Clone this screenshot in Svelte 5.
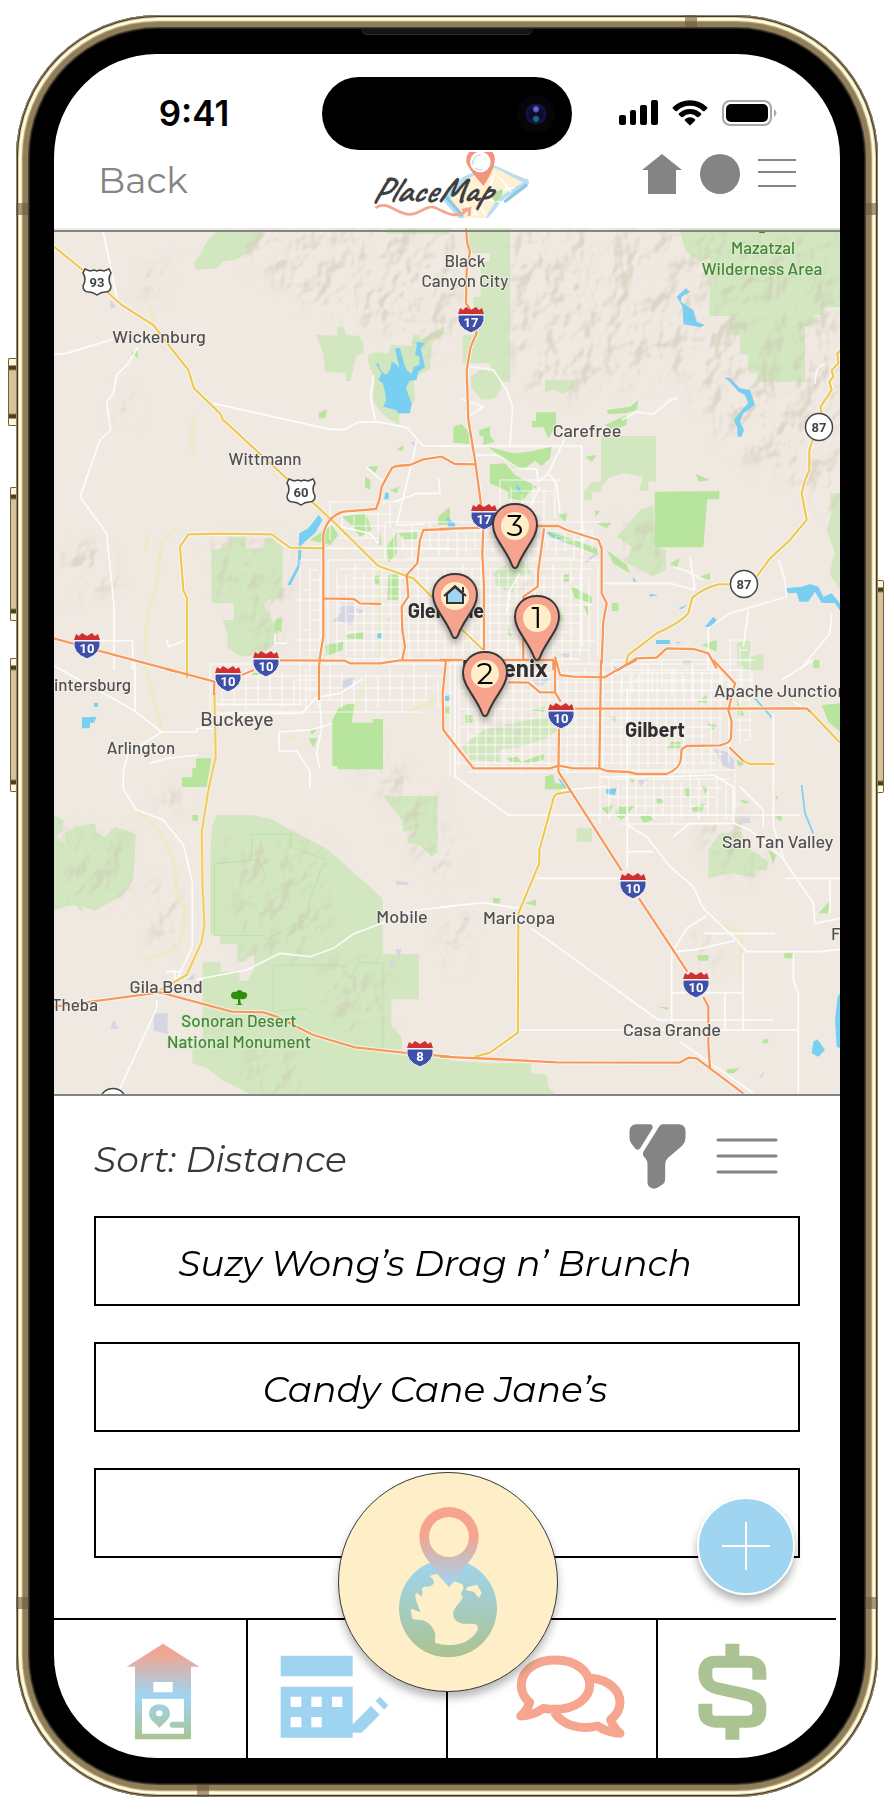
<script>
  const places = ['Suzy Wong’s Drag n’ Brunch', 'Candy Cane Jane’s', ''];

  // Pin tips on the map, in map units.
  const pins = [
    { label: '3', x: 515, y: 568 },
    { label: '', x: 455, y: 638 },
    { label: '1', x: 537, y: 660 },
    { label: '2', x: 485, y: 716 }
  ];

  const origin = {
    nw: 'translate(50 220) scale(.33333)',
    ne: 'translate(440 220) scale(.33333)',
    sw: 'translate(50 660) scale(.33333)',
    se: 'translate(440 660) scale(.33333)'
  };

  const parks = [
    ['nw', 'M470 65L500 35H638V50L610 75L600 95L560 118L520 125L500 145L440 150L432 130L450 105Z'],
    ['nw', 'M1010 25H1200V42H1010Z'],
    ['nw', 'M798 345L862 347V320H880L890 345L925 348L940 365V400L918 408L902 483H888V458L825 456L820 400Z'],
    ['nw', 'M955 405L985 395L1012 402L1025 375L1085 378L1090 345H1110L1112 360L1182 318V340L1145 368L1140 448L1105 465L1090 480L1095 540L1075 572L1048 585V615L1008 592L985 565L968 540L975 480L955 430Z'],
    ['nw', 'M484 990L537 982V952H587V985H643V955H665L698 982V1135H665L640 1150L680 1225V1265L650 1290L590 1310L565 1305L532 1285V1240L518 1200H552V1150H484Z'],
    ['ne', 'M75 25H210V485H152V430H68V345H100V230H122V125H150V100H80Z'],
    ['ne', 'M92 470L125 447L185 455L182 510L165 535L125 540L95 505Z'],
    ['ne', 'M315 480H402V500L370 522L340 510L315 515Z'],
    ['ne', 'M718 25H1200V262H1148V285H1120V320H1095V485H952V458H925V403H900V346H870V288H809V115L780 125L735 90Z'],
    ['ne', 'M483 648H648V785H625V812H598L608 770L548 760L505 775L485 800V815H455V840H432V815L455 785H483Z'],
    ['ne', 'M530 950L600 870L640 855L645 980L678 990V1050L640 1068L560 1030L575 980Z'],
    ['ne', 'M1170 820H1200V1110L1168 1060L1185 1000L1160 930L1175 880Z'],
    ['ne', 'M160 1060L230 1010L265 1035L272 1060L230 1070L220 1120L170 1100Z'],
    ['ne', 'M890 1270L930 1255V1310L970 1300V1350H895Z'],
    ['sw', 'M12 465L40 480V508L20 530L45 555V520L75 500L135 490L140 518L165 530L195 500L240 515L258 525L250 660L220 705L135 752L100 740L92 756L78 735L45 740L12 752Z'],
    ['sw', 'M500 465H605L665 478L835 570L998 715V882H1107V1018H1024V1098L1055 1130V1180L1200 1195V1302H600L525 1265L470 1225L427 1208V1170L458 1150V907H512V935H568V962H590L612 930V885L590 890L588 905H562V853H510V826H481V590L485 500Z'],
    ['sw', 'M1000 408H1163V578L1145 590L1110 555L1072 550L1095 510L1060 515L1055 480Z'],
    ['se', 'M0 1200L150 1210H272L275 1240L320 1245L325 1280L345 1302H0Z'],
    ['se', 'M65 260L130 210L240 185L320 170L355 210L320 235L240 260L180 270V305L90 300Z'],
    ['se', 'M805 570L840 520L905 515L915 560L952 580L985 605L980 630H945V655L875 640L805 655Z'],
    ['se', 'M410 505H456V545H410Z']
  ];

  const greens = [
    ['nw', 'M780 960L845 915L865 945L840 975ZM875 890L948 880L965 930L930 950L905 915ZM990 928L995 975L988 975ZM1010 980L1040 935L1040 1000L1015 1030ZM1045 940L1102 935L1100 960L1060 958ZM972 1070L987 1065V1095L975 1090ZM1015 1065L1045 1060V1140H1012ZM886 1245L940 1235V1258L890 1255ZM826 1275L880 1265L878 1290L830 1308ZM1020 810L1048 800L1040 820ZM1040 690L1060 675V692ZM945 770L962 780L960 810L945 800ZM1165 890L1200 860V915H1165ZM805 580L832 568L825 595L808 595ZM243 400L262 390L265 415ZM678 1200L695 1190V1235L672 1230ZM950 740L985 738L975 760Z'],
    ['ne', 'M40 620L65 612L88 640V672L40 668ZM118 630L150 620V648L165 665L130 675V648H118ZM288 577H348V620L325 655L310 622H276V603H288ZM500 570L570 560L595 540L590 570L555 580L505 582ZM495 615L560 585L560 615L520 630ZM145 680L220 700L270 695L335 680L330 715L305 738L285 722L255 745H225ZM150 733L195 730L225 765L290 800L265 820L248 842L205 835V815L150 790ZM644 815L838 813V838H802L790 982H644ZM435 710L470 705L455 725ZM768 762L810 780L775 785ZM315 928L470 985L475 1005L330 950ZM390 1095L455 1130V1150L405 1135ZM465 870L480 875L465 890ZM470 910L515 908L500 925ZM500 990L560 1035L570 1060L520 1030ZM355 885L382 880L375 905ZM370 1065L387 1062V1085H370ZM430 1155L445 1160V1190ZM515 1148L535 1150V1173H515ZM355 1170L370 1185V1205L352 1200ZM690 1030L720 1015L710 1045ZM780 1070L810 1058V1080ZM785 1275L830 1260V1295ZM270 1215L290 1225L280 1240ZM205 1215L215 1250L200 1245Z'],
    ['sw', 'M847 180L865 145L890 132H912L905 188H968V177H999V328H862V318H847ZM438 295H484L470 381H396V352H427V325H438ZM427 465H444V482H427ZM775 235H803L790 262ZM780 210L803 207L785 225ZM608 38H625V46H605Z'],
    ['se', 'M315 350L340 343L345 370L375 372V388H315ZM485 445L520 435L505 465ZM535 440L588 435L545 480L525 465ZM600 470L625 460L640 480L610 488ZM755 445L795 430L785 455L760 455ZM735 385L750 380V412L738 410ZM785 375L805 385L795 402ZM895 418L930 425L915 432ZM1003 470L1025 465V485ZM1005 408H1013V422ZM158 715H180V730H160ZM255 730L288 718V738ZM772 885H806V902H775ZM1033 878H1060V895H1033ZM1135 760L1168 725L1165 760ZM652 1040L685 1042V1050ZM968 1138H985V1150H968ZM860 1228L898 1225L882 1240L862 1240ZM985 570L1008 585L1000 612ZM800 190L830 195L820 210ZM695 245H722V265H680ZM890 115L912 165L895 170ZM770 125L800 105V130ZM1145 135L1200 130V215L1165 185ZM1120 0H1138V25H1120ZM15 140L30 140V160H15ZM75 165L98 165V188H78ZM265 150L315 140L312 155ZM200 295L230 290L245 305L315 280L310 300L270 310L210 305ZM505 170L528 170L525 185ZM565 355L585 358L580 370ZM650 415L670 420V430H650ZM890 300L918 310L895 320Z']
  ];

  const waters = [
    ['nw', 'M985 430L992 450L1008 465L1020 450L1025 425L1035 430L1048 445L1038 400L1035 385L1050 385L1062 430L1070 450L1085 462L1092 440L1108 435V410L1095 405L1100 380V365L1125 370L1112 385L1125 442L1105 455L1100 480L1078 482L1068 505L1085 550L1080 580H1045L1038 570L1000 560L1008 540L1005 515L998 490L985 480L995 460L978 432Z'],
    ['nw', 'M806 885L817 900L795 940L765 965L755 975L752 1035L722 1095L712 1095L743 1035L748 940L775 925Z'],
    ['nw', 'M1005 818H1016V838H1003ZM982 1240H995V1255H982ZM1188 893L1200 900V915Z'],
    ['ne', 'M710 230L738 205L750 215L725 230L722 245L760 270L770 305L795 315L780 322L730 312L728 260Z'],
    ['ne', 'M852 472L870 475L900 505L930 510L945 555L910 580L900 605L912 630L905 650H892V625L882 600L905 570L925 550L915 525L895 515L870 485Z'],
    ['ne', 'M1035 1105L1085 1100L1110 1092L1135 1100L1150 1130L1175 1120L1200 1150V1172L1185 1150L1145 1148L1125 1115L1105 1145L1078 1145L1070 1118L1045 1120Z'],
    ['ne', 'M20 892L45 910V920H25ZM230 790L245 815L230 815ZM648 1260H690V1272H648ZM712 1265L725 1270H710ZM820 1190L830 1200L815 1222L795 1220ZM715 1165L742 1155L725 1167ZM628 1122L655 1125L630 1130ZM318 932L370 960L370 965L318 940ZM578 1070L592 1088L580 1084Z'],
    ['sw', 'M96 172L140 170L132 188H120V205H96ZM132 128H144V140H132ZM1187 110H1200V120H1187Z'],
    ['se', 'M498 388L530 385L525 405L500 402ZM1120 1145L1132 1138L1155 1170L1135 1190L1115 1180ZM15 108L32 105V122H15ZM522 22H535L525 28ZM1200 1000V1165L1190 1160L1185 1080L1193 1010Z']
  ];

  const towns = [
    ['nw', 'M875 1150H912V1190L905 1215L870 1205L845 1205L872 1180ZM918 1165L940 1170L930 1185ZM180 240L195 255V265H180ZM1080 668L1095 665V678ZM1010 1205L1028 1180L1020 1200Z'],
    ['ne', 'M435 1025L468 995L470 1005L440 1030ZM362 1300H388V1312H362Z'],
    ['sw', 'M870 95L880 60L912 52L905 75ZM310 1060H353V1122L312 1112ZM1037 867H1055L1047 900ZM1020 905H1034V920H1020ZM1037 662L1075 667V674H1040ZM180 1105L192 1080L205 1108ZM410 960L435 940L430 960Z'],
    ['se', 'M820 265L860 275L882 300V330L850 318ZM595 360L632 352L600 378ZM900 475H930V489H900ZM70 775L88 770L78 788ZM730 0H752V15H730ZM270 60L335 55L300 80ZM955 1255L972 1235L968 1250Z']
  ];

  const washes = [
    ['nw', 'M382 925L335 960L322 1080L292 1190L285 1310M437 580L423 640L432 700M300 255L312 315M290 945V995'],
    ['sw', 'M285 20L325 160L333 215M262 452Q350 520 375 620L378 690L405 750L395 830Q380 880 290 897M955 60L905 160M1085 150L1180 115M708 232H738'],
    ['se', 'M840 795L905 815L900 940'],
    ['nw', 'M990 1010V1310M900 990V1000']
  ];

  const minor = [
    ['nw', 'M160 36L200 230M12 403L50 400L190 357M265 380L235 430L200 465L190 520L170 545L182 630L150 660L90 830L170 940L192 1155V1350M490 550L840 628H885L925 607L980 605L1070 622L1120 678H1200M970 465L962 530L975 600M1100 665L1040 915M948 740L1000 785M1030 845L1075 830L1100 820L1170 820L1165 775M350 1260L355 1280L402 1262M115 1262H248V1350M822 985H1200M848 915L960 940L985 970M675 1240V1270H710M1042 915L1125 912'],
    ['ne', 'M0 678H425V1280M60 535L130 560L85 590M90 440L160 450L200 510L218 560L210 675M110 705H175L235 745L290 748L295 785L325 760L375 655M325 760L350 790L360 880M270 860L300 800M545 600L590 575L640 583L690 540L715 535M490 1090H690L740 1103L765 1110M1015 1020L1035 1080L1040 1130L870 1180L805 1225V1350M1175 1180L1170 1240L1120 1300L1080 1350M925 1170L910 1280M1155 428L1130 450L1125 490M700 1040L745 1055L790 1080M750 1010L765 1110M240 1060L210 1110L200 1180'],
    ['sw', 'M12 17L250 150L335 216H440V205H495M335 216L235 280L220 330V388L260 450L340 480L400 555L427 665V860L380 960M255 0V150M300 310L350 295L445 285M495 160H755L800 112L870 100L940 55M805 60L815 205L800 280L810 328M687 216L780 210L820 200L845 190M687 216V273H740L780 335V385M440 958L590 930L690 880L780 890L850 865L910 822L1100 750L1200 740M320 1020V1045L208 1290M348 935H395M375 930V960M500 133H755'],
    ['se', 'M45 0V350L205 465H1080M0 742L130 728L235 745M290 655H540M562 80V625M562 495L620 530L690 620L760 680L790 745L890 840L920 875H1140L1200 868M800 768L740 805L695 880V1110M710 875L770 868L885 842M235 1110H1075M275 805L655 1080H1000M562 575H640M365 390L500 380M483 350L700 350L820 345L880 380V490L930 510L1025 590L1120 730L1125 790L1200 775M1000 160V500L1030 590M970 500V450L900 380M1060 880V960L1075 1000V1300M790 820H1005M1170 655V760M1035 655H1200M720 1145L940 1300M855 1000V1110M910 880V1110M695 998H910M700 530L750 490H890M1025 60L1120 0M1060 125L1085 140']
  ];

  const yellowRoads = [
    ['nw', 'M12 80L100 152L215 255L310 315L360 380L415 450L432 505L510 580L518 598L710 775L850 905L985 1038L1090 1075L1200 1185M822 985L720 983L665 943L520 941L415 943L390 980L400 1110L411 1135V1375'],
    ['ne', 'M20 1185L130 1290M1200 392L1192 400L1195 430L1175 450L1180 470L1168 485L1175 510L1142 560L1145 590M1118 660L1108 690V750L1095 780L1085 820L1100 900L1045 965L990 1015L950 1070M868 1093H835Q790 1105 757 1133L745 1180Q720 1210 650 1240L565 1305L558 1330'],
    ['sw', 'M493 100L497 290L475 390L455 515L457 670L463 795L455 845L410 945L330 990'],
    ['se', 'M1108 152L1200 248M910 303L930 312H1003M390 395L350 402L342 410L298 570V610L235 760L234 1118L150 1178L105 1190']
  ];

  const highways = [
    ['nw', 'M12 1255L145 1292L380 1355M690 1321L885 1322L900 1330H990L1050 1321H1200M807 1440V1340L810 1310L820 1250V945Q830 890 880 875L978 867L988 840L995 800L1025 745Q1030 737 1080 735L1120 718L1175 710L1215 732L1275 733M1200 927L1120 930L1110 960L1102 1030L1070 1065L1075 1130L1055 1160L1057 1230L1065 1280L1057 1318M822 1135L912 1137L930 1150L993 1152'],
    ['ne', 'M78 25L82 70L90 95L80 150L78 250L92 270L110 340L92 380L80 450L85 600L105 720L120 830L130 920L127 1000L132 1100V1290M0 927L130 923M290 918H355L380 930L475 960L485 985V1120L500 1150L490 1205L485 1330M312 925L305 980L295 1050L293 1100L250 1130V1320M0 1320H340V1350M530 1352L590 1315L650 1313L680 1285L760 1287L805 1300L830 1345'],
    ['sw', 'M350 27L412 43L493 65L492 105M575 45L612 30'],
    ['se', 'M483 0L478 325M205 67L265 68L300 97H345L362 125M345 0V98M345 -10L360 45L400 50L495 52L530 30L560 15L590 0M357 205L355 335L545 632M597 715L742 935M790 1010L805 1040V1150L810 1225M0 1190L160 1197L350 1207L718 1208L745 1193L770 1195L910 1300M405 146L1100 145L1110 155M18 0L8 100L10 210L100 325H330L357 317L400 325H480L500 333L565 336L590 342H680Q720 325 722 300L725 268L740 258L840 256Q870 250 873 235L875 185L865 150L885 70L820 0M868 262L910 303'],
    ['sw', 'M12 1040L330 997L545 1055L640 1057L680 1070L790 1125L915 1162L1060 1178L1200 1190']
  ];

  const relief = [
    'M240 228H460V320L440 360L420 350L380 330L330 320L290 290L250 270Z',
    'M508 228H680L700 300L690 370L600 390L560 400L510 380Z',
    'M680 300L840 290V520L790 480L740 460L690 400Z',
    'M680 232H840V380H740Z',
    'M60 540L110 545L120 590L70 600ZM140 270L175 260L160 300L145 300ZM110 390L135 400L130 430L115 420Z',
    'M210 540H290V600H220ZM240 610L280 600L285 650L250 655Z',
    'M365 730L400 770L430 790L465 870L440 880L410 850L390 800L360 775Z',
    'M365 730L400 770L430 790L465 870L440 880L410 850L390 800L360 775Z',
    'M220 840H330V960H240ZM60 830H130V900H60ZM150 880L180 890L175 950L150 940ZM320 960H390V1040H330Z',
    'M240 1050H300V1095H250ZM700 820L760 810V880L710 870ZM620 520L670 510V570H620ZM690 930L720 940L715 970L700 960ZM440 910L470 920L460 970L445 960Z',
    'M465 735L550 715L550 735L490 750ZM510 560L540 560L530 600L500 590ZM145 800L195 780L185 810L155 805Z'
  ];

  // Street grids: left, top, right, bottom, spacing.
  const grids = [
    [328, 560, 600, 665, 9], [385, 522, 600, 560, 9], [330, 502, 400, 540, 12],
    [300, 560, 324, 705, 10], [210, 664, 450, 712, 12], [450, 664, 735, 775, 9],
    [600, 770, 736, 824, 9], [500, 480, 560, 530, 11], [730, 640, 755, 750, 10],
    [612, 660, 755, 700, 10]
  ];
  const gridPath = grids
    .map(([l, t, r, b, s]) => {
      let d = '';
      for (let x = l, i = 0; x <= r; x += s, i++) d += `M${x} ${t + (i * 7) % 17}V${b - (i * 5) % 13}`;
      for (let y = t, i = 0; y <= b; y += s, i++) d += `M${l + (i * 11) % 23} ${y}H${r - (i * 7) % 29}`;
      return d;
    })
    .join('');

  const interstates = [
    ['10', 87, 646], ['10', 228, 679], ['10', 266, 664], ['8', 420, 1054], ['17', 471, 320],
    ['17', 484, 517], ['10', 561, 716], ['10', 633, 886], ['10', 696, 985]
  ];
  const usRoutes = [['93', 97, 282], ['60', 301, 492]];
  const stateRoutes = [['87', 819, 427], ['87', 744, 584], ['', 113, 1102]];

  const labels = [
    ['Wickenburg', 159, 343, 18], ['Wittmann', 265, 465, 17], ['Black', 465, 267, 17],
    ['Canyon City', 465, 287, 17], ['Carefree', 587, 437, 18], ['Buckeye', 237, 726, 20],
    ['Arlington', 141, 754, 17], ['Gila Bend', 166, 993, 18], ['Mobile', 402, 923, 18],
    ['Maricopa', 519, 924, 18], ['Casa Grande', 672, 1036, 18], ['Wintersburg', 131, 691, 17, 'end'],
    ['Theba', 98, 1011, 17, 'end'], ['Apache Junction', 714, 697, 18, 'start'],
    ['San Tan Valley', 722, 848, 18, 'start'], ['Florence', 831, 940, 18, 'start']
  ];
  const cities = [['Glendale', 446, 618, 20], ['Phoenix', 505, 677, 24], ['Gilbert', 655, 737, 20]];
  const reserves = [
    ['Mazatzal', 763, 254], ['Wilderness Area', 762, 275],
    ['Sonoran Desert', 239, 1027], ['National Monument', 239, 1048]
  ];
</script>

{#snippet shapes(list)}
  {#each list as [q, d]}
    <path transform={origin[q]} {d} />
  {/each}
{/snippet}

<div class="page">
  <div class="phone">
    <i class="key action"></i><i class="key up"></i><i class="key down"></i><i class="key power"></i>
    <i class="band lt"></i><i class="band lb"></i><i class="band rt"></i><i class="band rb"></i>
    <i class="band top"></i><i class="band bottom"></i>
    <i class="speaker"></i>

    <main class="screen">
      <div class="status">
        <span class="time">9:41</span>
        <div class="island"><i class="lens"></i></div>
        <div class="signals">
          <svg width="39" height="26" viewBox="0 0 39 26" aria-hidden="true">
            <rect y="15" width="7" height="10" rx="2" /><rect x="11" y="10" width="6" height="15" rx="2" />
            <rect x="21" y="5" width="7" height="20" rx="2" /><rect x="32" width="7" height="25" rx="2" />
          </svg>
          <svg width="36" height="26" viewBox="0 0 108 78" aria-hidden="true">
            <path d="M54 1Q84 1 106 22Q107 25 104 27L98 33Q95 35 92 32Q76 17 54 17T16 32Q13 35 10 33L4 27Q1 25 2 22Q24 1 54 1Z" />
            <path d="M54 27Q73 27 87 40Q89 43 87 45L80 51Q78 53 75 51Q66 42 54 42T33 51Q30 53 28 51L21 45Q19 43 21 40Q35 27 54 27Z" />
            <path d="M54 52Q63 52 69 58Q71 60 69 62L56 75Q54 77 52 75L39 62Q37 60 39 58Q45 52 54 52Z" />
          </svg>
          <svg width="55" height="27" viewBox="0 0 55 27" aria-hidden="true">
            <rect x="1" y="1" width="48" height="24" rx="7" fill="none" stroke="#a8a8a8" stroke-width="2" />
            <rect x="4" y="4" width="42" height="18" rx="5" /><path d="M52 9Q57 13 52 17Z" fill="#a8a8a8" />
          </svg>
        </div>
      </div>

      <header class="header">
        <a class="back" href="#back">Back</a>
        <svg class="logo" viewBox="0 0 474 198" width="158" height="66" role="img" aria-label="PlaceMap logo">
          <path d="M365 38C405 52 430 70 470 82Q478 90 470 100C440 120 405 130 385 155Q368 180 350 198H262L220 150Q212 138 224 128Q250 105 275 75L310 60Z" fill="#b7def2" />
          <path d="M372 48C405 62 425 78 456 90C430 110 400 120 378 145Q358 168 345 198H282L232 146Q255 125 285 82L320 66Z" fill="#fff1d0" />
          <path d="M222 130L275 192M468 98L400 150" fill="none" stroke="#8fc6e4" stroke-width="10" />
          <path d="M275 100L345 190M255 128L320 190M370 60L355 120L430 108M355 120L300 195M385 75L420 120M330 140L390 150" fill="none" stroke="#fff" stroke-width="5" />
          <path d="M362 135Q380 110 396 112Q392 145 372 150Z" fill="#b9dda1" />
          <path d="M338 102Q292 52 286 30Q283 0 312 -12H350Q378 4 370 34Q365 60 338 102Z" fill="#f2957f" />
          <circle cx="328" cy="30" r="31" fill="#fff" />
          <path d="M328 8Q304 12 305 38M312 48Q322 56 336 53" fill="none" stroke="#c9dbe8" stroke-width="4" />
          <path d="M16 166C50 145 75 185 112 187S165 155 195 168S255 205 292 172" fill="none" stroke="#f6a48f" stroke-width="8" stroke-linecap="round" />
          <path d="M273 174L297 169L294 192" fill="none" stroke="#f6a48f" stroke-width="8" />
          <text x="2" y="151" class="word">PlaceMap</text>
        </svg>
        <nav class="tools" aria-label="Top menu">
          <button aria-label="Home"><svg width="40" height="40" viewBox="0 0 40 40"><path d="M20 0L40 16H34V40H6V16H0Z" /></svg></button>
          <button aria-label="Profile"><svg width="40" height="40" viewBox="0 0 40 40"><circle cx="20" cy="20" r="20" /></svg></button>
          <button aria-label="Menu"><svg width="38" height="40" viewBox="0 0 38 40"><path d="M0 5H38V7H0ZM0 17H38V19H0ZM0 31H38V33H0Z" /></svg></button>
        </nav>
      </header>

      <section class="map" aria-label="Map">
        <svg class="chart" viewBox="54 228 786 868" preserveAspectRatio="xMidYMid slice">
          <defs>
            <filter id="hills" x="0" y="0" width="100%" height="100%">
              <feTurbulence type="fractalNoise" baseFrequency=".04 .032" numOctaves="3" seed="8" result="n" />
              <feDiffuseLighting in="n" surfaceScale="6" diffuseConstant="1" lighting-color="#fff" result="lit"><feDistantLight azimuth="225" elevation="50" /></feDiffuseLighting>
              <feColorMatrix in="lit" type="matrix" values="0 0 0 0 .62  0 0 0 0 .59  0 0 0 0 .46  -3.4 0 0 0 2.6" result="shade" />
              <feGaussianBlur in="SourceGraphic" stdDeviation="8" result="soft" />
              <feComposite in="shade" in2="soft" operator="in" />
            </filter>
          </defs>
          <rect x="54" y="228" width="786" height="868" fill="#f0e9e2" />
          <g fill="#d2e7c0">{@render shapes(parks)}</g>
          <g fill="none" stroke="#b9e3a3" stroke-width="3">
            <path transform={origin.sw} d="M605 600V523H725L720 560L825 598L775 730V775L645 840V826H493V612L625 598L650 655M670 915V1055M670 915H870L900 955L928 908H998V1165M670 1055L770 1045" />
          </g>
          <g fill="none" stroke="#eaebcb" stroke-width="12">{@render shapes(washes)}</g>
          <g filter="url(#hills)" opacity=".55">{#each relief as d}<path {d} />{/each}</g>
          <g fill="#b7e59e">{@render shapes(greens)}</g>
          <g fill="#d5d6e3">{@render shapes(towns)}</g>
          <g fill="#78cff1">{@render shapes(waters)}</g>
          <path transform={origin.se} d="M1085 375L1095 460L1120 520M945 115L995 172M358 358L378 385" fill="none" stroke="#78cff1" stroke-width="5" />
          <path d={gridPath} fill="none" stroke="#fff" stroke-width="1" opacity=".8" />
          <g fill="none" stroke="#fff" stroke-width="5" stroke-linejoin="round" opacity=".85">{@render shapes(minor)}</g>
          <g fill="none" stroke="#fff" stroke-width="11" stroke-linejoin="round">{@render shapes(yellowRoads)}{@render shapes(highways)}</g>
          <g fill="none" stroke="#edc957" stroke-width="7" stroke-linejoin="round">{@render shapes(yellowRoads)}</g>
          <g fill="none" stroke="#f8995a" stroke-width="7" stroke-linejoin="round">{@render shapes(highways)}</g>

          {#each interstates as [n, x, y]}
            <g transform="translate({x} {y})">
              <path d="M-13 -5Q-15 7 0 13Q15 7 13 -5Z" fill="#3f50a8" stroke="#fff" stroke-width="1" />
              <path d="M-13 -6L-11 -12L-8 -10L-5 -13L0 -10L5 -13L8 -10L11 -12L13 -6Z" fill="#cf3030" />
              <text y="7" class="shield light">{n}</text>
            </g>
          {/each}
          {#each usRoutes as [n, x, y]}
            <g transform="translate({x} {y})">
              <path d="M-12 -13L-7 -11L-3 -12L0 -11L3 -12L7 -11L12 -13L14 -9Q10 -3 14 4Q14 10 8 10Q4 10 0 13Q-4 10 -8 10Q-14 10 -14 4Q-10 -3 -14 -9Z" fill="#fff" stroke="#444" stroke-width="1.5" />
              <text y="5" class="shield">{n}</text>
            </g>
          {/each}
          {#each stateRoutes as [n, x, y]}
            <g transform="translate({x} {y})">
              <circle r="13.5" fill="#fff" stroke="#444" stroke-width="1.5" />
              <text y="5" class="shield">{n}</text>
            </g>
          {/each}
          <path d="M231 996Q231 991 236 992Q239 988 243 992Q248 992 247 996Q246 1000 240 999L241 1004L243 1005H235L238 1004L238 999Q232 1000 231 996ZM760 230L764 230L765 233H759Z" fill="#2f8f0d" />

          {#each labels as [t, x, y, size, anchor]}
            <text {x} {y} class="town" font-size={size} text-anchor={anchor ?? 'middle'}>{t}</text>
          {/each}
          {#each cities as [t, x, y, size]}
            <text {x} {y} class="town city" font-size={size} text-anchor="middle">{t}</text>
          {/each}
          {#each reserves as [t, x, y]}
            <text {x} {y} class="town reserve" font-size="17" text-anchor="middle">{t}</text>
          {/each}
          <path d="M54 230H840V232H54ZM54 1094H840V1096H54Z" fill="#848484" />
        </svg>

        {#each pins as p}
          <button
            class="pin"
            aria-label={p.label ? `Place ${p.label}` : 'Home'}
            style="left: {((p.x - 54) / 786) * 100}%; top: {((p.y - 228) / 868) * 100}%"
          >
            <svg width="46" height="68" viewBox="0 0 46 68">
              <path d="M23 66Q21 66 20 63C14 47 1 36 1 23C1 10 11 2 23 2S45 10 45 23C45 36 32 47 26 63Q25 66 23 66Z" fill="#f6a48d" stroke="#383838" stroke-width="2" />
              <circle cx="23" cy="24" r="14" fill="#ffefc8" />
              {#if p.label}
                <text x="23" y="34" class="digit">{p.label}</text>
              {:else}
                <path d="M15 22L23 15L31 22V31H15Z" fill="#a0d5f1" stroke="#333" stroke-width="2" />
                <path d="M12 24L23 14L34 24M31 15V20" fill="none" stroke="#333" stroke-width="2" />
              {/if}
            </svg>
          </button>
        {/each}
      </section>

      <section class="results">
        <div class="sort">
          <h2>Sort: Distance</h2>
          <button aria-label="Filter">
            <svg width="57" height="65" viewBox="554 103 170 195">
              <path d="M574 104H618Q628 108 623 118L587 176Q580 184 573 177L562 164Q555 156 555 146V124Q555 107 574 104ZM655 104H704Q723 106 723 124V146Q723 158 713 168L670 205Q662 213 662 224V268Q662 278 656 283L641 293Q632 299 622 296Q609 291 609 278V222Q609 214 604 208L597 199Q592 192 598 184L645 109Q649 104 655 104Z" />
            </svg>
          </button>
          <button aria-label="List options">
            <svg width="62" height="36" viewBox="0 0 62 36"><path d="M2 2H60M2 18H60M2 34H60" stroke="#848484" stroke-width="3" stroke-linecap="round" /></svg>
          </button>
        </div>
        <div class="cards">
          {#each places as name}
            <button class="card" aria-label={name || 'More places'}>{name}</button>
          {/each}
        </div>
        <button class="add" aria-label="Add place">
          <svg width="48" height="48" viewBox="0 0 48 48"><path d="M0 23H48V25H0ZM23 0H25V48H23Z" fill="#fff" /></svg>
        </button>
      </section>

      <nav class="tabs" aria-label="Main">
        <a class="home" href="#home" aria-label="Home">
          <svg width="74" height="97" viewBox="378 550 222 291">
            <defs><linearGradient id="sky" x1="0" y1="0" x2="0" y2="1"><stop offset="0" stop-color="#f6a48d" /><stop offset=".12" stop-color="#eda896" /><stop offset=".55" stop-color="#9dd5f4" /><stop offset="1" stop-color="#aac392" /></linearGradient></defs>
            <path fill="url(#sky)" fill-rule="evenodd" d="M489 552L598 621H573V839H405V621H380ZM460 667V698H518V667ZM426 717V822H552V804H518Q509 804 509 795T518 786H552V717ZM478 804L455 781Q447 772 447 764Q447 735 478 734Q510 735 510 764Q510 773 502 781ZM478 752A10 9 0 1 0 478 770A10 9 0 1 0 478 752Z" />
          </svg>
        </a>
        <a class="plan" href="#plan" aria-label="Plans">
          <svg width="109" height="83" viewBox="838 586 327 249" fill="#9fd4f1">
            <path fill-rule="evenodd" d="M840 588H1056V650H840ZM840 681H1056V834H840ZM870 711V742H902V711ZM932 711V742H963V711ZM994 711V742H1025V711ZM870 772V803H902V772ZM932 772V803H963V772ZM1056 794L1111 739L1137 765L1083 819H1056ZM1125 724L1137 711L1163 737L1151 750Z" />
          </svg>
        </a>
        <a class="chat" href="#chat" aria-label="Messages">
          <svg width="109" height="83" viewBox="215 586 327 249" fill="none" stroke="#f6a68f" stroke-width="27" stroke-linejoin="round">
            <path d="M256 728C205 685 232 601 333 601C395 601 436 635 436 675S395 749 333 749Q312 749 297 746Q265 768 229 769Q250 750 256 728Z" />
            <path d="M440 656C498 661 527 695 527 728Q527 758 499 780Q508 805 527 821Q490 819 460 799C410 812 355 798 330 758" />
          </svg>
        </a>
        <a class="money" href="#money" aria-label="Payments">
          <svg width="69" height="97" viewBox="761 550 207 291" fill="#abc392">
            <path d="M843 552H885V588H912Q966 590 966 640V660H924V630Q924 624 918 624H811Q804 624 804 632V650Q804 664 820 668L914 688Q966 700 966 742V755Q966 802 912 804H885V840H843V804H815Q762 802 762 752V732H804V762Q804 768 811 768H912Q924 768 924 755V742Q924 730 908 725L815 704Q762 690 762 640Q764 588 815 588H843Z" />
          </svg>
        </a>
      </nav>

      <button class="explore" aria-label="Explore">
        <svg width="100" height="153" viewBox="1191 135 300 459">
          <defs>
            <linearGradient id="globe" x1="0" y1="0" x2="0" y2="1"><stop offset="0" stop-color="#9fd5f2" /><stop offset="1" stop-color="#aac38f" /></linearGradient>
            <linearGradient id="drop" x1="0" y1="0" x2="0" y2="1"><stop offset=".35" stop-color="#f6a48d" /><stop offset="1" stop-color="#9dd5f4" /></linearGradient>
          </defs>
          <circle cx="1341" cy="442" r="147" fill="url(#globe)" />
          <path d="M1285 345L1308 338L1344 378L1360 361L1384 370L1388 380L1380 398L1385 410C1375 430 1356 440 1356 460Q1360 484 1385 488H1418Q1434 490 1430 506C1412 540 1380 552 1342 552Q1320 552 1302 545L1303 520Q1295 490 1267 478L1235 475Q1228 455 1231 443L1258 454L1244 415Q1240 395 1249 396L1262 407Q1266 395 1263 382L1270 377Q1290 380 1299 366Q1300 355 1285 345ZM1395 387Q1395 378 1408 376L1429 371L1442 396L1434 411L1419 393Z" fill="#ffefc8" />
          <path fill="url(#drop)" fill-rule="evenodd" d="M1344 378L1276 292Q1255 260 1255 227A89 89 0 0 1 1433 227Q1433 260 1412 292ZM1344 168A60 60 0 1 0 1344 288A60 60 0 1 0 1344 168Z" />
        </svg>
      </button>
    </main>
  </div>
</div>

<style>
  :global(body) { margin: 0; background: #fff; }
  .page { padding: 15px 16px; font-family: Montserrat, Inter, "Open Sans", sans-serif; }
  .phone {
    position: relative;
    padding: 39px 38px;
    border-radius: 142px;
    background: #000;
    box-shadow:
      inset 0 0 0 1px #8b836f, inset 0 0 0 2px #45391d, inset 0 0 0 3px #d9cda4,
      inset 0 0 0 5px #fffde8, inset 0 0 0 6px #efe6c1, inset 0 0 0 7px #b3a274,
      inset 0 0 0 12px #8f7e58, inset 0 0 0 13px #4a4130, inset 0 0 0 14px #202122;
  }
  .screen {
    position: relative;
    overflow: hidden;
    border-radius: 103px;
    background: #fff;
  }
  .key {
    position: absolute;
    left: -6px;
    width: 6px;
    height: 134px;
    box-sizing: border-box;
    border: 1px solid #6e6040;
    border-right: 0;
    border-radius: 2px 0 0 2px;
    background: linear-gradient(#fff6d4 0 6px, #4a3d20 7px 10px, #d6c39a 12px calc(100% - 12px), #4a3d20 calc(100% - 10px) calc(100% - 7px), #fff6d4 calc(100% - 6px));
  }
  .action { left: -8px; width: 8px; top: 343px; height: 68px; }
  .up { top: 472px; }
  .down { top: 643px; }
  .power { left: auto; right: -6px; top: 565px; height: 213px; transform: scaleX(-1); }
  .band { position: absolute; width: 12px; height: 12px; background: rgb(112 88 62 / 60%); }
  .lt { left: 0; top: 188px; }
  .rt { right: 0; top: 188px; }
  .lb { left: 0; bottom: 188px; }
  .rb { right: 0; bottom: 188px; }
  .top { right: 181px; top: 0; }
  .bottom { left: 181px; bottom: 0; }
  .speaker {
    position: absolute;
    left: 50%;
    top: 14px;
    width: 172px;
    height: 5px;
    margin-left: -86px;
    border-radius: 0 0 6px 6px;
    border-bottom: 1px solid #2b2b2b;
    background: #151515;
  }

  .status {
    display: grid;
    grid-template-columns: 1fr 250px 1fr;
    align-items: start;
    height: 98px;
    padding-top: 23px;
    box-sizing: border-box;
  }
  .time { padding: 16px 0 0 12px; text-align: center; font: 600 35px/40px Inter, sans-serif; }
  .island { height: 73px; border-radius: 37px; background: #000; position: relative; }
  .lens {
    position: absolute;
    right: 25px;
    top: 26px;
    width: 22px;
    height: 22px;
    border-radius: 50%;
    background: radial-gradient(circle at 50% 28%, #6a63c8 0 2px, transparent 4px), radial-gradient(circle at 50% 72%, #1d6b76 0 2px, transparent 4px), radial-gradient(#0a0a2c 40%, #14144a 60%, #08080f 72%);
    box-shadow: 0 0 0 8px #080508;
  }
  .signals { display: flex; gap: 14px; padding: 23px 0 0 47px; }

  .header {
    display: grid;
    grid-template-columns: 1fr 158px 1fr;
    align-items: start;
    height: 76px;
  }
  .back { padding: 6px 0 0 44px; color: #848484; font-size: 36px; line-height: 44px; font-weight: 400; text-decoration: none; }
  .logo { display: block; margin-left: 3px; }
  .word { font: italic 600 108px Caveat, Kalam, "Dancing Script", Lato, sans-serif; fill: #3f3f3f; }
  .tools { display: flex; justify-content: flex-end; gap: 18px; padding: 2px 44px 0 0; }
  button { padding: 0; border: 0; background: none; color: inherit; font: inherit; cursor: pointer; }
  .tools svg, .sort svg { display: block; fill: #848484; }

  .map { position: relative; }
  .chart { display: block; width: 100%; overflow: hidden; font-family: Barlow, Roboto, sans-serif; }
  .town { fill: #505052; stroke: #f4efe9; stroke-width: 2px; paint-order: stroke; font-weight: 500; }
  .city { fill: #2f2f31; font-weight: 700; }
  .reserve { fill: #448733; font-weight: 500; stroke: #dcebcf; }
  .shield { font: 700 13px Roboto, sans-serif; text-anchor: middle; fill: #444; }
  .light { fill: #fff; }
  .pin { position: absolute; width: 46px; height: 68px; margin: -66px 0 0 -23px; filter: drop-shadow(0 4px 3px rgb(0 0 0 / 35%)); }
  .pin svg { display: block; }
  .digit { font: 400 30px Montserrat, Inter, sans-serif; text-anchor: middle; fill: #000; }

  .results { position: relative; padding: 0 40px 60px; }
  .sort { display: flex; align-items: center; gap: 30px; height: 120px; padding-right: 22px; }
  h2 { flex: 1; margin: 0; padding-top: 6px; color: #383838; font-size: 36px; line-height: 44px; font-weight: 400; font-style: italic; }
  .cards { display: grid; gap: 36px; }
  .card {
    height: 90px;
    padding: 3px 24px 0 0;
    border: 2px solid #000;
    background: #fff;
    color: #000;
    font-size: 36px;
    line-height: 44px;
    font-weight: 400;
    font-style: italic;
  }
  .add {
    position: absolute;
    right: 45px;
    bottom: 23px;
    display: grid;
    place-items: center;
    width: 98px;
    height: 98px;
    border: 2px solid #fff;
    border-radius: 50%;
    background: #a0d5f1;
    box-shadow: 0 6px 8px rgb(0 0 0 / 30%);
  }

  .tabs {
    display: grid;
    grid-template-columns: 194fr 200fr 210fr 178fr;
    height: 140px;
    margin-right: 4px;
    box-sizing: border-box;
    border-top: 2px solid #000;
  }
  .tabs a { display: flex; align-items: flex-end; padding-bottom: 18px; border-right: 2px solid #000; }
  .tabs a:last-child { border-right: 0; }
  .tabs .home { padding-left: 72px; }
  .tabs .plan { padding-left: 32px; }
  .tabs .chat { padding-left: 68px; }
  .tabs .money { padding-left: 40px; }
  .tabs .plan, .tabs .chat { padding-bottom: 20px; }

  .explore {
    position: absolute;
    left: 50%;
    bottom: 66px;
    display: grid;
    place-items: center;
    width: 220px;
    height: 220px;
    margin-left: -109px;
    border: 1px solid #383838;
    border-radius: 50%;
    background: #ffefc8;
    box-shadow: 0 6px 8px rgb(0 0 0 / 28%);
  }
</style>
